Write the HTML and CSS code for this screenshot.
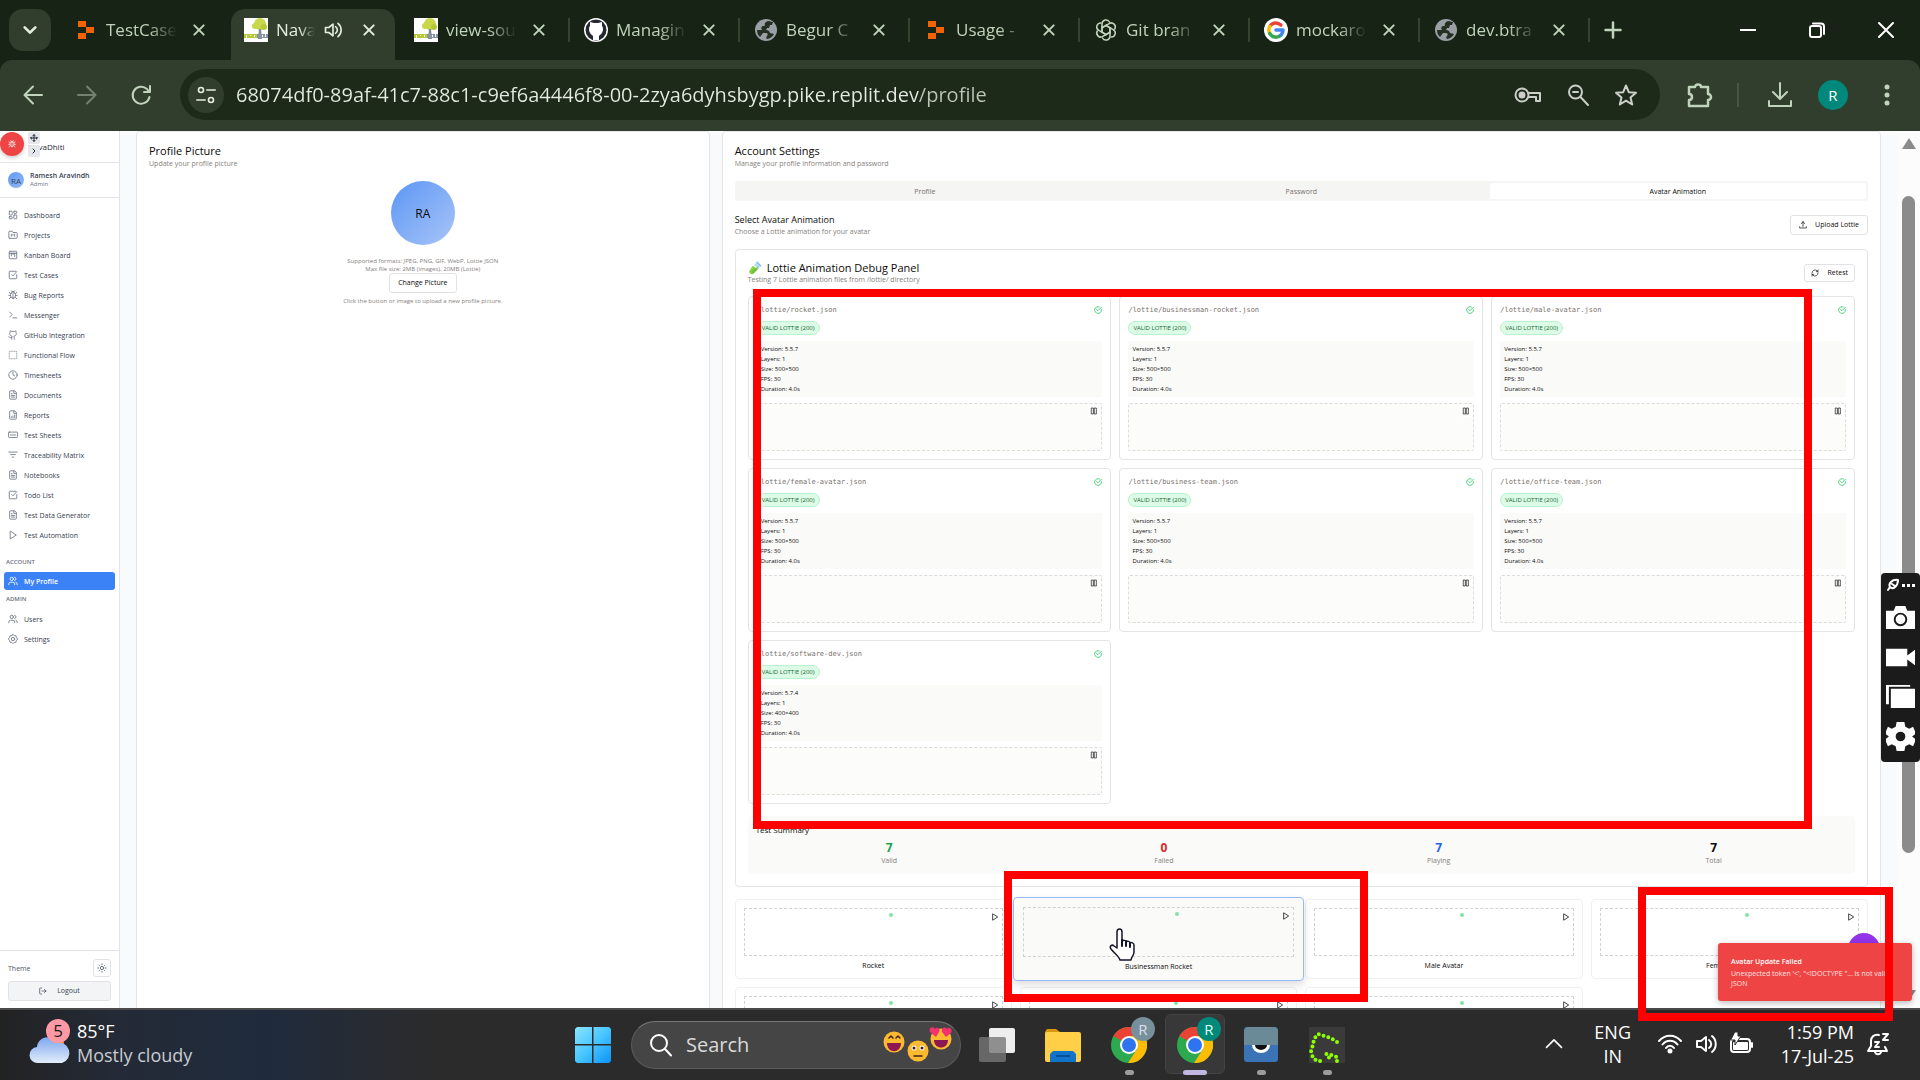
FILE: index.html
```html
<!DOCTYPE html>
<html lang="en">
<head>
<meta charset="utf-8">
<title>NavaDhiti</title>
<link rel="stylesheet" href="styles.css">
</head>
<body>
<svg class="sprite" aria-hidden="true">
  <defs>
    <symbol id="x" viewBox="0 0 24 24"><path d="M5 5l14 14M19 5L5 19"/></symbol>
    <symbol id="globe" viewBox="0 0 24 24"><circle cx="12" cy="12" r="11" fill="#9aa0a6" stroke="none"/><path fill="#172314" stroke="none" d="M14 3c-3 1-4 3-3 5h-2c-2 0-2 3-1 4H3c0 3 1 5 3 7l3-4h3c2 0 2 2 1 3s-1 2 0 3c3 0 6-3 7-5l-4-1c-1-3-3-3-4-3l1-2h2l1-3h2l1-3z" opacity=".9"/></symbol>
    <symbol id="replit" viewBox="0 0 24 24"><path fill="#f26207" stroke="none" d="M4 3h8v6H4zM12 9h8v6h-8zM4 15h8v6H4z"/></symbol>
    <symbol id="tree" viewBox="0 0 24 24"><path fill="#fff" stroke="none" d="M0 0h24v24H0z"/><g stroke="none"><circle cx="16" cy="6" r="6" fill="#c8d84a"/><circle cx="11" cy="8" r="3" fill="#c8d84a"/><circle cx="20" cy="9" r="3" fill="#b4ca35"/><path fill="#7d8a96" d="M15 11h2l1 10h-4z"/><path fill="#b4ca35" d="M0 16h13v4H0z"/><path fill="#8893a4" d="M13 16h11v4H13z"/><path fill="#fff" d="M2 17h1v3H2zM6 17h1v1H6zM10 17h1v2h-1zM18 17h1v2h-1zM21 16h1v3h-1z"/></g></symbol>
    <symbol id="dashboard" viewBox="0 0 24 24"><rect x="3" y="3" width="7" height="9" rx="1"/><rect x="14" y="3" width="7" height="5" rx="1"/><rect x="14" y="12" width="7" height="9" rx="1"/><rect x="3" y="16" width="7" height="5" rx="1"/></symbol>
    <symbol id="folder" viewBox="0 0 24 24"><path d="M4 20h16a2 2 0 0 0 2-2V8a2 2 0 0 0-2-2h-8l-2-3H4a2 2 0 0 0-2 2v13a2 2 0 0 0 2 2zM8 10v5M12 10v3M16 10v5"/></symbol>
    <symbol id="kanban" viewBox="0 0 24 24"><rect x="3" y="3" width="18" height="18" rx="2"/><path d="M8 7v7M12 7v4M16 7v9M3 8h18"/></symbol>
    <symbol id="check-square" viewBox="0 0 24 24"><path d="M21 11v8a2 2 0 0 1-2 2H5a2 2 0 0 1-2-2V5a2 2 0 0 1 2-2h14M9 11l3 3 9-10"/></symbol>
    <symbol id="bug" viewBox="0 0 24 24"><path d="M8 2l2 2M14 4l2-2M9 7V6a3 3 0 0 1 6 0v1M12 20c-3 0-6-3-6-6v-3a4 4 0 0 1 4-4h4a4 4 0 0 1 4 4v3c0 3-3 6-6 6zM12 20v-9M6 9L3 5M6 13H2M3 21l4-4M18 9l3-4M22 13h-4M17 17l4 4"/></symbol>
    <symbol id="terminal" viewBox="0 0 24 24"><path d="M4 17l6-6-6-6M12 19h9"/></symbol>
    <symbol id="github" viewBox="0 0 24 24"><path d="M15 22v-4c.1-1-.3-2.500-1-3.500 3 0 6-2 6-5.500 0-1.200-.3-2.500-1-3.500.3-1.100.3-2.300 0-3.500 0 0-1 0-3 1.500-2.600-.5-5.400-.5-8 0C6 2 5 2 5 2c-.3 1.200-.3 2.400 0 3.500C4.300 6.500 4 7.800 4 9c0 3.500 3 5.500 6 5.500-1 1-1.200 2.400-1 3.500v4M9 18c-4.500 2-5-2-7-2"/></symbol>
    <symbol id="dashed-square" viewBox="0 0 24 24"><path d="M5 3a2 2 0 0 0-2 2M19 3a2 2 0 0 1 2 2M21 19a2 2 0 0 1-2 2M5 21a2 2 0 0 1-2-2M9 3h1M9 21h1M14 3h1M14 21h1M3 9v1M21 9v1M3 14v1M21 14v1"/></symbol>
    <symbol id="clock" viewBox="0 0 24 24"><circle cx="12" cy="12" r="10"/><path d="M12 6v6l4 2"/></symbol>
    <symbol id="doc" viewBox="0 0 24 24"><path d="M15 2H6a2 2 0 0 0-2 2v16a2 2 0 0 0 2 2h12a2 2 0 0 0 2-2V7zM14 2v6h6M8 9h2M8 13h8M8 17h8"/></symbol>
    <symbol id="report" viewBox="0 0 24 24"><path d="M15 2H6a2 2 0 0 0-2 2v16a2 2 0 0 0 2 2h12a2 2 0 0 0 2-2V7zM14 2v6h6M8 18v-2M12 18v-4M16 18v-6"/></symbol>
    <symbol id="sheet" viewBox="0 0 24 24"><rect x="1" y="5" width="22" height="13" rx="2"/><path d="M5 12h14"/></symbol>
    <symbol id="filter" viewBox="0 0 24 24"><path d="M2 5h20M6 11h12M10 17h4"/></symbol>
    <symbol id="play" viewBox="0 0 24 24"><path d="M6 3l14 9-14 9z"/></symbol>
    <symbol id="pause" viewBox="0 0 24 24"><path d="M5 3h5v18H5zM14 3h5v18h-5z"/></symbol>
    <symbol id="users" viewBox="0 0 24 24"><path d="M16 21v-2a4 4 0 0 0-4-4H6a4 4 0 0 0-4 4v2M22 21v-2a4 4 0 0 0-3-3.900M16 3.100a4 4 0 0 1 0 7.800"/><circle cx="9" cy="7" r="4"/></symbol>
    <symbol id="settings" viewBox="0 0 24 24"><path d="M12 1l3 3 4 0 1 4 3 4-3 4-1 4-4 0-3 3-3-3-4 0-1-4-3-4 3-4 1-4 4 0z"/><circle cx="12" cy="12" r="4"/></symbol>
    <symbol id="move" viewBox="0 0 24 24"><path d="M12 2v20M2 12h20M9 5l3-3 3 3M9 19l3 3 3-3M5 9l-3 3 3 3M19 9l3 3-3 3"/></symbol>
    <symbol id="chev-r" viewBox="0 0 24 24"><path d="M9 6l6 6-6 6"/></symbol>
    <symbol id="sun" viewBox="0 0 24 24"><circle cx="12" cy="12" r="4"/><path d="M12 2v2M12 20v2M5 5l1 1M18 18l1 1M2 12h2M20 12h2M6 18l-1 1M19 5l-1 1"/></symbol>
    <symbol id="logout" viewBox="0 0 24 24"><path d="M8 21H4a2 2 0 0 1-2-2V5a2 2 0 0 1 2-2h4M16 17l5-5-5-5M21 12H9"/></symbol>
    <symbol id="upload" viewBox="0 0 24 24"><path d="M2 17v4h20v-4M17 8l-5-6-5 6M12 2v15"/></symbol>
    <symbol id="refresh" viewBox="0 0 24 24"><path d="M3 12a9 9 0 0 1 15-6.700L21 8M21 3v5h-5M21 12a9 9 0 0 1-15 6.700L3 16M8 16H3v5"/></symbol>
    <symbol id="ok" viewBox="0 0 24 24"><path d="M22 11v1a10 10 0 1 1-6-9.100M8 11l4 3 10-10"/></symbol>
    <symbol id="speaker" viewBox="0 0 24 24"><path d="M3 9v6h4l5 4V5L7 9zM15 8c3 2 3 6 0 8M18 4c5 4 5 12 0 16"/></symbol>
    <symbol id="chrome" viewBox="0 0 36 36"><g stroke="none"><circle cx="18" cy="18" r="18" fill="#2da94f"/><path fill="#ea4335" d="M18 18L2.400 9A18 18 0 0 1 33.600 9z"/><path fill="#fbbc05" d="M18 9h15.600A18 18 0 0 1 17 36l9-14z"/><circle cx="18" cy="18" r="9" fill="#fff"/><circle cx="18" cy="18" r="7" fill="#2f73ee"/></g></symbol>
  </defs>
</svg>

<header class="browser">
  <div class="tabstrip">
    <button class="tab-search" aria-label="Search tabs"><svg class="ic16" viewBox="0 0 24 24"><path d="M4 8l8 8 8-8"/></svg></button>
    <div class="tab"><svg class="fav"><use href="#replit"/></svg><span class="tab-title">TestCase</span><button class="tab-x" aria-label="Close"><svg><use href="#x"/></svg></button></div>
    <div class="tab active"><svg class="fav"><use href="#tree"/></svg><span class="tab-title short">Nava</span><svg class="audio"><use href="#speaker"/></svg><button class="tab-x" aria-label="Close"><svg><use href="#x"/></svg></button></div>
    <div class="tab sep"><svg class="fav"><use href="#tree"/></svg><span class="tab-title">view-sou</span><button class="tab-x" aria-label="Close"><svg><use href="#x"/></svg></button></div>
    <div class="tab sep"><svg class="fav" viewBox="0 0 24 24"><circle cx="12" cy="12" r="12" fill="#fff" stroke="none"/><circle cx="12" cy="12" r="10.500" fill="#24292f" stroke="none"/><path fill="#fff" stroke="none" d="M9 22v-4c-1-1-4-3-4-7 0-2 1-3 1-3V4l4 1h4l4-1v4s1 1 1 3c0 4-3 6-4 7v4z"/></svg><span class="tab-title">Managin</span><button class="tab-x" aria-label="Close"><svg><use href="#x"/></svg></button></div>
    <div class="tab sep"><svg class="fav"><use href="#globe"/></svg><span class="tab-title">Begur C</span><button class="tab-x" aria-label="Close"><svg><use href="#x"/></svg></button></div>
    <div class="tab sep"><svg class="fav"><use href="#replit"/></svg><span class="tab-title">Usage -</span><button class="tab-x" aria-label="Close"><svg><use href="#x"/></svg></button></div>
    <div class="tab sep"><svg class="fav" viewBox="0 0 24 24" stroke="#fff"><g stroke-width="1.500"><path id="petal" d="M12 7.500l4 2.300v5.400M8 9.500V6a4 4 0 0 1 7.500-2"/><use href="#petal" transform="rotate(60 12 12)"/><use href="#petal" transform="rotate(120 12 12)"/><use href="#petal" transform="rotate(180 12 12)"/><use href="#petal" transform="rotate(240 12 12)"/><use href="#petal" transform="rotate(300 12 12)"/></g></svg><span class="tab-title">Git bran</span><button class="tab-x" aria-label="Close"><svg><use href="#x"/></svg></button></div>
    <div class="tab sep"><svg class="fav" viewBox="0 0 24 24"><circle cx="12" cy="12" r="12" fill="#fff" stroke="none"/><g stroke-width="3.500"><path stroke="#ea4335" d="M5.800 8.500a7 7 0 0 1 11-1.500"/><path stroke="#fbbc05" d="M5.800 15.500a7 7 0 0 1 0-7"/><path stroke="#34a853" d="M17 17a7 7 0 0 1-11.200-1.500"/><path stroke="#4285f4" d="M12 12h7a7 7 0 0 1-2 5"/></g></svg><span class="tab-title">mockaro</span><button class="tab-x" aria-label="Close"><svg><use href="#x"/></svg></button></div>
    <div class="tab sep"><svg class="fav"><use href="#globe"/></svg><span class="tab-title">dev.btra</span><button class="tab-x" aria-label="Close"><svg><use href="#x"/></svg></button></div>
    <button class="new-tab" aria-label="New tab"><svg class="ic20" viewBox="0 0 24 24"><path d="M12 3v18M3 12h18"/></svg></button>
    <div class="win-ctl">
      <button aria-label="Minimize"><svg class="ic16" viewBox="0 0 16 16"><path d="M0 8h16"/></svg></button>
      <button aria-label="Restore"><svg class="ic16" viewBox="0 0 16 16"><rect x="1" y="4" width="11" height="11" rx="2"/><path d="M4 1.500h8a3 3 0 0 1 3 3V12"/></svg></button>
      <button aria-label="Close window"><svg class="ic16" viewBox="0 0 16 16"><path d="M1 1l14 14M15 1L1 15"/></svg></button>
    </div>
  </div>
  <div class="toolbar">
    <button aria-label="Back"><svg class="ic24" viewBox="0 0 24 24"><path d="M21 12H4M12 3.500L3.500 12l8.500 8.500"/></svg></button>
    <button aria-label="Forward" class="dim"><svg class="ic24" viewBox="0 0 24 24"><path d="M3 12h17M12 3.500l8.500 8.500-8.500 8.500"/></svg></button>
    <button aria-label="Reload"><svg class="ic24" viewBox="0 0 24 24"><path d="M20.500 14a8.500 8.500 0 1 1-2.500-8l2 2.500M21 3v6h-6"/></svg></button>
    <div class="omnibox">
      <button class="site-info" aria-label="Site information"><svg class="ic20" viewBox="0 0 24 24"><circle cx="6" cy="6" r="3"/><path d="M13 6h10M1 18h10"/><circle cx="18" cy="18" r="3"/></svg></button>
      <input class="url" aria-label="Address" value="68074df0-89af-41c7-88c1-c9ef6a4446f8-00-2zya6dyhsbygp.pike.replit.dev/profile">
      <button aria-label="Passwords"><svg class="ic28" viewBox="0 0 28 24"><circle cx="8" cy="12" r="6.500"/><circle cx="8" cy="12" r="2.500" fill="currentColor"/><path d="M14 10h12v8h-4v-4h-7"/></svg></button>
      <button aria-label="Zoom"><svg class="ic24" viewBox="0 0 24 24"><circle cx="9.500" cy="9" r="6.500"/><path d="M14.500 14l7.500 8M7 9h5"/></svg></button>
      <button aria-label="Bookmark"><svg class="ic24" viewBox="0 0 24 24"><path d="M12 2.500l2.800 6.700 7.200.6-5.500 4.700 1.700 7L12 17.700 5.800 21.500l1.700-7L2 9.800l7.200-.6z"/></svg></button>
    </div>
    <button aria-label="Extensions" class="ext"><svg class="ic28" viewBox="0 0 28 28"><path stroke-width="2.500" d="M3 6h6a3 2.500 0 0 1 6 0h7v7a3 3 0 0 1 0 6v6H3v-6c4 0 4-6 0-6z"/></svg></button>
    <span class="tb-sep"></span>
    <button aria-label="Downloads" class="dl"><svg class="ic28 bold" viewBox="0 0 28 28"><path d="M14 2v15M7 11l7 7 7-7M3 20v5h22v-5"/></svg></button>
    <button aria-label="Account" class="acct">R</button>
    <button aria-label="Menu"><svg class="ic24" viewBox="0 0 24 24"><g fill="currentColor" stroke="none"><circle cx="12" cy="4" r="2.500"/><circle cx="12" cy="12" r="2.500"/><circle cx="12" cy="20" r="2.500"/></g></svg></button>
  </div>
</header>

<div class="viewport">
  <aside class="sidebar">
    <div class="brand">
      <span class="brand-name">NavaDhiti</span>
      <button class="fab" aria-label="Report a bug"><svg class="ic8"><use href="#bug"/></svg></button>
      <button class="mini m1" aria-label="Move"><svg class="ic8"><use href="#move"/></svg></button>
      <button class="mini m2" aria-label="Expand"><svg class="ic8"><use href="#chev-r"/></svg></button>
    </div>
    <div class="user"><span class="user-av">RA</span><div><div class="user-name">Ramesh Aravindh</div><div class="user-role">Admin</div></div></div>
    <nav class="nav">
      <a href="#"><svg><use href="#dashboard"/></svg>Dashboard</a>
      <a href="#"><svg><use href="#folder"/></svg>Projects</a>
      <a href="#"><svg><use href="#kanban"/></svg>Kanban Board</a>
      <a href="#"><svg><use href="#check-square"/></svg>Test Cases</a>
      <a href="#"><svg><use href="#bug"/></svg>Bug Reports</a>
      <a href="#"><svg><use href="#terminal"/></svg>Messenger</a>
      <a href="#"><svg><use href="#github"/></svg>GitHub Integration</a>
      <a href="#"><svg><use href="#dashed-square"/></svg>Functional Flow</a>
      <a href="#"><svg><use href="#clock"/></svg>Timesheets</a>
      <a href="#"><svg><use href="#doc"/></svg>Documents</a>
      <a href="#"><svg><use href="#report"/></svg>Reports</a>
      <a href="#"><svg><use href="#sheet"/></svg>Test Sheets</a>
      <a href="#"><svg><use href="#filter"/></svg>Traceability Matrix</a>
      <a href="#"><svg><use href="#doc"/></svg>Notebooks</a>
      <a href="#"><svg><use href="#check-square"/></svg>Todo List</a>
      <a href="#"><svg><use href="#doc"/></svg>Test Data Generator</a>
      <a href="#"><svg><use href="#play"/></svg>Test Automation</a>
      <h2 class="first">ACCOUNT</h2>
      <a href="#" class="current"><svg><use href="#users"/></svg>My Profile</a>
      <h2>ADMIN</h2>
      <a href="#"><svg><use href="#users"/></svg>Users</a>
      <a href="#"><svg><use href="#settings"/></svg>Settings</a>
    </nav>
    <div class="side-foot">
      <div class="theme-row"><span>Theme</span><button class="btn sq" aria-label="Toggle theme"><svg class="ic10"><use href="#sun"/></svg></button></div>
      <button class="btn logout"><svg class="ic8"><use href="#logout"/></svg>Logout</button>
    </div>
  </aside>

  <main class="content">
    <section class="card">
      <h1>Profile Picture</h1>
      <p class="sub">Update your profile picture</p>
      <div class="pic">
        <div class="big-av">RA</div>
        <p class="hint">Supported formats: JPEG, PNG, GIF, WebP, Lottie JSON<br>Max file size: 2MB (images), 20MB (Lottie)</p>
        <button class="btn">Change Picture</button>
        <p class="hint">Click the button or image to upload a new profile picture.</p>
      </div>
    </section>

    <section class="card wide">
      <h1>Account Settings</h1>
      <p class="sub">Manage your profile information and password</p>
      <div class="tabs" role="tablist"><button role="tab">Profile</button><button role="tab">Password</button><button role="tab" aria-selected="true" class="on">Avatar Animation</button></div>
      <div class="sec-head">
        <div><h3>Select Avatar Animation</h3><p class="sub">Choose a Lottie animation for your avatar</p></div>
        <button class="btn"><svg class="ic8"><use href="#upload"/></svg>Upload Lottie</button>
      </div>

      <div class="panel">
        <div class="panel-head">
          <div>
            <h2 class="panel-title"><svg class="tube" viewBox="0 0 24 24"><g stroke="none"><path fill="#b9dcef" d="M15 2l7 7-4 4-8-6z"/><path fill="#8bd545" d="M8 8l9 6-8 8c-4 3-9-2-6-6z"/><path fill="#4cae35" d="M5 18l12-9 1 4-9 9z" opacity=".5"/><path fill="#7ab7e5" d="M14 2l2-1 7 7-1 2z"/></g></svg>Lottie Animation Debug Panel</h2>
            <p class="sub">Testing 7 Lottie animation files from /lottie/ directory</p>
          </div>
          <button class="btn small"><svg class="ic8"><use href="#refresh"/></svg>Retest</button>
        </div>
        <div class="tests">
          <article class="test"><div class="file">/lottie/rocket.json<svg class="ic8"><use href="#ok"/></svg></div><span class="badge">VALID LOTTIE (200)</span><div class="info">Version: 5.5.7<br>Layers: 1<br>Size: 500×500<br>FPS: 30<br>Duration: 4.0s</div><div class="stage"><button aria-label="Pause"><svg class="ic8"><use href="#pause"/></svg></button></div></article>
          <article class="test"><div class="file">/lottie/businessman-rocket.json<svg class="ic8"><use href="#ok"/></svg></div><span class="badge">VALID LOTTIE (200)</span><div class="info">Version: 5.5.7<br>Layers: 1<br>Size: 500×500<br>FPS: 30<br>Duration: 4.0s</div><div class="stage"><button aria-label="Pause"><svg class="ic8"><use href="#pause"/></svg></button></div></article>
          <article class="test"><div class="file">/lottie/male-avatar.json<svg class="ic8"><use href="#ok"/></svg></div><span class="badge">VALID LOTTIE (200)</span><div class="info">Version: 5.5.7<br>Layers: 1<br>Size: 500×500<br>FPS: 30<br>Duration: 4.0s</div><div class="stage"><button aria-label="Pause"><svg class="ic8"><use href="#pause"/></svg></button></div></article>
          <article class="test"><div class="file">/lottie/female-avatar.json<svg class="ic8"><use href="#ok"/></svg></div><span class="badge">VALID LOTTIE (200)</span><div class="info">Version: 5.5.7<br>Layers: 1<br>Size: 500×500<br>FPS: 30<br>Duration: 4.0s</div><div class="stage"><button aria-label="Pause"><svg class="ic8"><use href="#pause"/></svg></button></div></article>
          <article class="test"><div class="file">/lottie/business-team.json<svg class="ic8"><use href="#ok"/></svg></div><span class="badge">VALID LOTTIE (200)</span><div class="info">Version: 5.5.7<br>Layers: 1<br>Size: 500×500<br>FPS: 30<br>Duration: 4.0s</div><div class="stage"><button aria-label="Pause"><svg class="ic8"><use href="#pause"/></svg></button></div></article>
          <article class="test"><div class="file">/lottie/office-team.json<svg class="ic8"><use href="#ok"/></svg></div><span class="badge">VALID LOTTIE (200)</span><div class="info">Version: 5.5.7<br>Layers: 1<br>Size: 500×500<br>FPS: 30<br>Duration: 4.0s</div><div class="stage"><button aria-label="Pause"><svg class="ic8"><use href="#pause"/></svg></button></div></article>
          <article class="test"><div class="file">/lottie/software-dev.json<svg class="ic8"><use href="#ok"/></svg></div><span class="badge">VALID LOTTIE (200)</span><div class="info">Version: 5.7.4<br>Layers: 1<br>Size: 400×400<br>FPS: 30<br>Duration: 4.0s</div><div class="stage"><button aria-label="Pause"><svg class="ic8"><use href="#pause"/></svg></button></div></article>
        </div>
        <div class="summary">
          <h4>Test Summary</h4>
          <div class="stats">
            <div><b class="green">7</b><span>Valid</span></div>
            <div><b class="red">0</b><span>Failed</span></div>
            <div><b class="blue">7</b><span>Playing</span></div>
            <div><b>7</b><span>Total</span></div>
          </div>
        </div>
      </div>

      <div class="avatars">
        <div class="choice"><div class="preview"><i class="dot"></i><svg class="ic8"><use href="#play"/></svg></div><span>Rocket</span></div>
        <div class="choice hover"><div class="preview"><i class="dot"></i><svg class="ic8"><use href="#play"/></svg></div><span>Businessman Rocket</span></div>
        <div class="choice"><div class="preview"><i class="dot"></i><svg class="ic8"><use href="#play"/></svg></div><span>Male Avatar</span></div>
        <div class="choice"><div class="preview"><i class="dot"></i><svg class="ic8"><use href="#play"/></svg></div><span>Female Avatar</span></div>
        <div class="choice"><div class="preview"><i class="dot"></i><svg class="ic8"><use href="#play"/></svg></div><span>Business Team</span></div>
        <div class="choice"><div class="preview"><i class="dot"></i><svg class="ic8"><use href="#play"/></svg></div><span>Office Team</span></div>
        <div class="choice"><div class="preview"><i class="dot"></i><svg class="ic8"><use href="#play"/></svg></div><span>Software Dev</span></div>
      </div>
    </section>
  </main>

  <div class="scrollbar"><span class="arrow up"></span><span class="thumb"></span><span class="arrow down"></span></div>
  <button class="chat" aria-label="Chat"></button>
  <div class="toast" role="alert"><strong>Avatar Update Failed</strong><p>Unexpected token '&lt;', "&lt;!DOCTYPE "... is not valid JSON</p></div>
</div>

<footer class="taskbar">
  <div class="weather">
    <svg class="cloud" viewBox="0 0 44 48"><defs><linearGradient id="cl" x1="0" y1="0" x2="0" y2="1"><stop offset="0" stop-color="#7ea6ee"/><stop offset="1" stop-color="#e2edfc"/></linearGradient></defs><g stroke="none"><circle cx="27" cy="24" r="8" fill="#ff8b1a"/><path fill="url(#cl)" d="M9 44a8 8 0 0 1-1-16 10 10 0 0 1 19-4 8 8 0 0 1 6 20z"/><circle cx="29" cy="12" r="12" fill="#ff99a4"/></g><text x="29" y="18" text-anchor="middle">5</text></svg>
    <div><div>85°F</div><div class="grey">Mostly cloudy</div></div>
  </div>
  <div class="apps">
    <button aria-label="Start" class="start"><svg viewBox="0 0 36 36"><defs><linearGradient id="wn" x1="0" y1="0" x2="1" y2="1"><stop offset="0" stop-color="#8be4ff"/><stop offset=".5" stop-color="#48c6ff"/><stop offset="1" stop-color="#0a93f9"/></linearGradient></defs><path stroke="none" fill="url(#wn)" d="M2 0h15v17H0V2zM18.500 0H34l2 2v15H18.500zM0 18.500h17V36H2l-2-2zM18.500 18.500H36V34l-2 2H18.500z"/></svg></button>
    <label class="search"><svg class="ic24" viewBox="0 0 24 24"><circle cx="11" cy="10" r="8"/><path d="M17 16l6 6.500"/></svg><input aria-label="Search" placeholder="Search">
      <svg class="emo" viewBox="0 0 70 44"><g stroke="none"><circle cx="11" cy="19" r="10.500" fill="#fdb92f"/><path fill="#8c1852" d="M4 20h14c0 11-14 11-14 0z"/><circle cx="35" cy="28" r="10.500" fill="#fdb92f"/><circle cx="31" cy="25" r="2.500" fill="#fff"/><circle cx="39" cy="25" r="2.500" fill="#fff"/><circle cx="31" cy="25" r="1.500" fill="#402216"/><circle cx="39" cy="25" r="1.500" fill="#402216"/><circle cx="58" cy="16" r="10.500" fill="#fdb92f"/><path fill="#8c1852" d="M51 17h14c0 10-14 10-14 0z"/><path fill="#f5306f" d="M53 14l-6-5c-2-5 4-6 5-3 2-3 6 0 4 3zM63 14l-4-5c-1-4 3-6 5-3 2-3 6 0 4 4z"/></g><path stroke="#402216" stroke-width="1.500" d="M31 33h8M6 15l2-2 2 2M13 15l2-2 2 2"/></svg></label>
    <button aria-label="Task view"><svg viewBox="0 0 36 36"><g stroke="none"><rect x="10" y="1" width="26" height="25" rx="2" fill="#eee"/><rect y="10" width="27" height="25" rx="2" fill="#777" opacity=".8"/></g></svg></button>
    <button aria-label="File Explorer"><svg viewBox="0 0 36 36"><g stroke="none"><path fill="#d9980a" d="M0 5l2-3h9l4 3v6H0z"/><rect y="5" width="36" height="30" rx="2" fill="#ffcf48"/><path fill="#1173c9" d="M5 35V27l3-3h20l3 3v8z"/><rect x="11" y="28" width="14" height="2" fill="#0a4e94"/></g></svg></button>
    <button aria-label="Chrome" class="app run"><svg><use href="#chrome"/></svg><span class="rb grey-b">R</span></button>
    <button aria-label="Chrome profile" class="app run cur"><svg><use href="#chrome"/></svg><span class="rb">R</span></button>
    <button aria-label="Viewer" class="app run"><svg viewBox="0 0 36 36"><g stroke="none"><rect x="1" width="34" height="35" rx="3" fill="#3a74b6"/><path fill="#6a8a98" d="M4 0h28l3 3v15H1V3z"/><path fill="#fff" d="M9 18h18a9 8 0 0 1-18 0z"/><path fill="#111" d="M12 18h12a6 5 0 0 1-12 0z"/></g></svg></button>
    <button aria-label="Greenshot" class="app run"><svg viewBox="0 0 36 36"><rect width="36" height="36" fill="#3a3a3a" stroke="none"/><path stroke="#8cff00" stroke-width="4" stroke-dasharray="0 5" d="M28 15L22 11 15 9 9 7 5 12 4 18 2 24 4 31 8 34 14 34M28 34V30L22 28 17 27 23 34"/></svg></button>
  </div>
  <div class="tray">
    <button aria-label="Hidden icons"><svg class="ic20" viewBox="0 0 24 24"><path d="M3 16l9-9 9 9"/></svg></button>
    <div class="lang">ENG<br>IN</div>
    <div class="status">
      <svg class="ic24" viewBox="0 0 24 24"><path d="M1 9c6-7 16-7 22 0M4.500 12.500c4-5 11-5 15 0M8 16c2-3 6-3 8 0"/><circle cx="12" cy="19" r="1.500" fill="#fff"/></svg>
      <svg class="ic24"><use href="#speaker"/></svg>
      <svg class="ic24" viewBox="0 0 24 24"><rect x="1" y="7" width="19" height="13" rx="3"/><path fill="#fff" d="M4 11h13v6H4zM22 11v4"/><path fill="#fff" stroke="#2b2b2b" stroke-width="1" d="M5 0h3v4h3L5 13v-5H1z"/></svg>
    </div>
    <div class="clock">1:59 PM<br>17-Jul-25</div>
    <svg class="ic24" viewBox="0 0 24 24"><path d="M13 3C8 2 5 5 5 9v5l-3 5h19l-2-4M9 20c1 3 5 3 6 0M9 10h4l-4 5h4M17 2h5l-5 6h5"/></svg>
  </div>
</footer>

<div class="dock">
  <div class="dock-top"><svg viewBox="0 0 14 14"><path stroke-width="2" d="M2 12l2-3M4 9c-2-3 2-8 8-7 0 6-5 10-8 7zM6 6l3 2"/></svg><svg viewBox="0 0 14 14"><path fill="#fff" stroke="none" d="M1 6h3v3H1zM6 6h3v3H6zM11 6h3v3h-3z"/></svg></div>
  <button aria-label="Screenshot"><svg viewBox="0 0 30 30"><path fill="#fff" stroke="none" d="M0 8h8l2-5h10l2 5h8v19H0z"/><circle cx="15" cy="17" r="6" stroke="#1b1b1b" stroke-width="2"/></svg></button>
  <button aria-label="Record"><svg viewBox="0 0 30 30"><path fill="#fff" stroke="none" d="M0 6h22v7l8-6v16l-8-6v7H0z"/></svg></button>
  <button aria-label="Gallery"><svg viewBox="0 0 30 30"><path fill="#fff" stroke="none" d="M0 3h25v2H3v18H0zM5 7h25v20H5z"/></svg></button>
  <button aria-label="Settings"><svg viewBox="0 0 30 30"><path fill="#fff" fill-rule="evenodd" stroke="none" d="M11 0h8l1 5 4 2 4-2 3 7-4 3 4 3-3 7-4-2-4 2-1 5h-8l-1-5-4-2-4 2-3-7 4-3-4-3 3-7 4 2 4-2zM15 10a5 5 0 1 0 0 10 5 5 0 0 0 0-10z"/></svg></button>
</div>
<div class="mark mark-tests"></div>
<div class="mark mark-choice"></div>
<div class="mark mark-toast"></div>
<svg class="hand" viewBox="0 0 26 34"><path fill="#fff" stroke="#15152a" stroke-width="1.500" d="M8 20V4c0-4 5-4 5 0v9c1-1 4-1 4 1 1-1 4-1 4 1 1-1 4 0 4 2v7c0 4-3 5-3 8H11c-1-4-5-6-9-11-2-3 1-5 3-3z"/><path stroke="#15152a" d="M13 12v6M17 13v5M21 15v4"/></svg>
</body>
</html>
```
FILE: styles.css
```css
* { box-sizing: border-box; margin: 0; padding: 0; }
html, body { height: 100%; }
body { display: flex; flex-direction: column; overflow: hidden; position: relative; font-family: "Open Sans", "Noto Sans", sans-serif; background: #f9fafb; }
button, input { font: inherit; color: inherit; border: 0; background: none; }
button { display: flex; align-items: center; justify-content: center; flex-shrink: 0; }
a { color: inherit; text-decoration: none; }
svg { display: block; flex-shrink: 0; fill: none; stroke: currentColor; stroke-width: 2; stroke-linecap: round; stroke-linejoin: round; }
.sprite { position: absolute; width: 0; height: 0; }
.ic8 { width: 8px; height: 8px; }
.ic10 { width: 10px; height: 10px; }
.ic16 { width: 16px; height: 16px; }
.ic20 { width: 20px; height: 20px; }
.ic24 { width: 24px; height: 24px; }
.ic28 { width: 28px; height: 28px; }
.bold { stroke-width: 3; }

/* Browser chrome */
.browser { background: #172314; color: #c0d3bb; flex-shrink: 0; }
.tabstrip { display: flex; align-items: center; height: 60px; padding-left: 9px; }
.tab-search { width: 42px; height: 42px; border-radius: 14px; background: #313e2e; color: #e3ecdf; margin-right: 8px; }
.tab-search svg { stroke-width: 4; }
.tab { flex: 0 1 170px; min-width: 0; height: 24px; display: flex; align-items: center; padding: 0 22px 0 15px; position: relative; }
.tab.sep::after { content: ""; position: absolute; right: -1px; top: 0; width: 2px; height: 24px; background: #35432f; }
.fav { width: 24px; height: 24px; margin-right: 8px; }
.tab-title { flex: 1; overflow: hidden; white-space: nowrap; font-size: 17px; line-height: 24px; mask-image: linear-gradient(90deg, #000 60%, transparent); margin-right: 14px; }
.tab-title.short { margin-right: 8px; }
.audio { width: 20px; height: 20px; margin-right: 18px; }
.tab-x svg { width: 16px; height: 16px; stroke-width: 3; }
.tab.active { height: 51px; align-self: flex-end; color: #e3ecdf; padding-bottom: 9px; }
.tab.active::before { content: ""; position: absolute; inset: 0 4px 0 2px; border-radius: 14px 14px 0 0; background: #313e2e; }
.tab.active > * { position: relative; }
.new-tab { width: 48px; height: 42px; }
.new-tab svg { stroke-width: 3; }
.win-ctl { display: flex; margin-left: auto; color: #fff; }
.win-ctl button { width: 69px; height: 60px; }
.win-ctl svg { stroke-width: 2; }
.toolbar { display: flex; align-items: center; height: 71px; padding: 0 21px 2px 21px; background: #313e2e; border-radius: 12px 12px 0 0; }
.toolbar > button { width: 24px; margin-right: 30px; }
.toolbar > .dim { color: #74826f; }
.toolbar > .ext { margin-right: 25px; }
.toolbar > .dl { margin-right: 26px; }
.toolbar svg { stroke-width: 2; }
.omnibox { flex: 1; display: flex; align-items: center; height: 51px; margin-right: 28px; padding: 0 22px 0 8px; border-radius: 26px; background: #1d2a1a; color: #cbcfc8; gap: 24px; margin-left: -3px; }
.site-info { width: 36px; height: 36px; border-radius: 50%; background: #313e2e; color: #e3ecdf; margin-right: -12px; }
.url { flex: 1; min-width: 0; font-size: 20px; line-height: 32px; background: linear-gradient(90deg, #e4ebe1 682px, #bcc5b8 682px); -webkit-background-clip: text; background-clip: text; color: transparent; }
.tb-sep { width: 2px; height: 24px; background: #475642; margin-right: 29px; }
.toolbar > .acct { width: 30px; height: 30px; border-radius: 50%; background: #00897b; color: #fff; font-size: 15px; margin-right: 27px; }
.toolbar > button:last-child { margin-right: 0; }

/* App viewport */
.viewport { flex: 1; min-height: 0; display: flex; position: relative; overflow: hidden; background: #f9fafb; color: #0c0a09; }
.sidebar { width: 120px; flex-shrink: 0; display: flex; flex-direction: column; background: #fff; border-right: 1px solid #e2e4e9; font-size: 7px; color: #374151; }
.brand { height: 32px; display: flex; align-items: center; padding-left: 28px; border-bottom: 1px solid #e2e4e9; position: relative; }
.brand-name { font-size: 8px; font-weight: 500; color: #1f2937; }
.fab { position: absolute; left: 0; top: 1px; width: 24px; height: 24px; border-radius: 50%; background: #ef4444; color: #fff; box-shadow: 0 2px 4px #0003; }
.mini { position: absolute; left: 28px; width: 12px; height: 12px; border-radius: 2px; background: #e5e7eb; color: #1f2937; }
.mini svg { stroke-width: 3; }
.m1 { top: 1px; }
.m2 { top: 14px; }
.user { display: flex; align-items: center; gap: 6px; height: 35px; padding-left: 8px; border-bottom: 1px solid #e2e4e9; line-height: 9px; }
.user-av { width: 16px; height: 16px; border-radius: 50%; background: linear-gradient(135deg, #5f99f6, #93b8f8); display: flex; align-items: center; justify-content: center; font-size: 8px; }
.user-name { font-weight: 600; }
.user-role { font-size: 6px; color: #6b7280; }
.nav { flex: 1; padding: 8px 4px; font-weight: 500; }
.nav a { display: flex; align-items: center; gap: 6px; height: 18px; margin-bottom: 2px; padding-left: 4px; border-radius: 3px; }
.nav a svg { width: 10px; height: 10px; color: #6b7280; }
.nav h2 { font-size: 6px; line-height: 10px; font-weight: 600; color: #6b7280; padding: 2px 2px 6px; }
.nav h2.first { padding-top: 11px; padding-bottom: 5px; }
.nav a.current { background: #3b82f6; color: #fff; font-weight: 600; }
.nav a.current svg { color: #fff; }
.side-foot { border-top: 1px solid #e2e4e9; padding: 8px 8px 7px; display: flex; flex-direction: column; gap: 4px; }
.theme-row { display: flex; justify-content: space-between; align-items: center; color: #4b5563; }
.btn { height: 20px; padding: 0 8px; gap: 8px; border: 1px solid #e2e2e4; border-radius: 3px; background: #fff; font-size: 7px; font-weight: 500; line-height: 10px; }
.btn.sq { width: 18px; height: 18px; padding: 0; }
.btn.small { height: 18px; padding: 0 6px; }
.btn.logout { background: #f3f4f6; gap: 10px; }

.content { flex: 1; min-width: 0; display: grid; grid-template-columns: repeat(3, minmax(0, 1fr)); gap: 12px; padding: 0 16px; }
.card { background: #fff; border: 1px solid #e4e5e8; border-radius: 4px 4px 0 0; padding: 11px 12px 12px; }
.wide { grid-column: span 2; }
h1 { font-size: 11px; line-height: 16px; font-weight: 500; }
.sub { font-size: 7px; line-height: 10px; color: #85817d; }
.pic { display: flex; flex-direction: column; align-items: center; margin-top: 12px; }
.big-av { width: 64px; height: 64px; border-radius: 50%; background: linear-gradient(135deg, #5c96f5, #a9c5f8); display: flex; align-items: center; justify-content: center; font-size: 12px; margin-bottom: 12px; }
.hint { font-size: 6px; line-height: 8px; text-align: center; color: #85817d; }
.pic .btn { margin-bottom: 4px; }
.tabs { display: grid; grid-template-columns: repeat(3, 1fr); height: 20px; margin-top: 12px; padding: 2px; border-radius: 3px; background: #f5f5f4; font-size: 7px; font-weight: 500; color: #78716c; }
.tabs .on { background: #fff; color: #0c0a09; border-radius: 2px; }
.sec-head { display: flex; justify-content: space-between; align-items: center; height: 24px; margin: 12px 0; }
h3 { font-size: 9px; line-height: 14px; font-weight: 500; }
.panel { border: 1px solid #e4e4e4; border-radius: 4px; padding: 12px; }
.panel-head { display: flex; justify-content: space-between; align-items: center; height: 22px; margin-bottom: 12px; }
.panel-title { display: flex; align-items: center; gap: 5px; font-size: 11px; line-height: 14px; font-weight: 500; }
.tube { width: 14px; height: 14px; }
.tests { display: grid; grid-template-columns: repeat(3, minmax(0, 1fr)); gap: 8px; }
.test { border: 1px solid #e4e4e4; border-radius: 4px; padding: 8px; display: flex; flex-direction: column; align-items: stretch; }
.file { display: flex; justify-content: space-between; align-items: center; height: 10px; font: 7px/10px "DejaVu Sans Mono", monospace; color: #78716c; }
.file svg { color: #4ccf7f; stroke-width: 3; }
.badge { align-self: flex-start; margin: 6px 0; height: 14px; padding: 0 4px; border: 1px solid #bbf0cd; border-radius: 7px; background: #dcfce7; color: #166534; font-size: 6px; line-height: 12px; font-weight: 500; }
.info { height: 56px; padding: 3px 4px; border-radius: 2px; background: #fafaf9; font-size: 6px; line-height: 10px; }
.stage { height: 48px; margin-top: 6px; border: 1px dashed #dcdcda; border-radius: 2px; background: #fcfcfb; display: flex; justify-content: flex-end; align-items: flex-start; padding: 1px; }
.stage button { width: 12px; height: 12px; background: #fff; border-radius: 2px; }
.summary { margin-top: 12px; padding: 8px; height: 58px; border-radius: 4px; background: #fafaf9; }
h4 { font-size: 8px; line-height: 12px; font-weight: 500; }
.stats { display: grid; grid-template-columns: repeat(4, 1fr); gap: 8px; margin-top: 4px; text-align: center; }
.stats b { display: block; font-size: 12px; line-height: 16px; }
.stats span { display: block; font-size: 7px; line-height: 10px; color: #85817d; }
.green { color: #16a34a; }
.red { color: #dc2626; }
.blue { color: #2563eb; }
.avatars { display: grid; grid-template-columns: repeat(4, minmax(0, 1fr)); gap: 8px; margin-top: 12px; }
.choice { height: 80px; padding: 8px; border: 1px solid #f0f0f0; border-radius: 4px; font-size: 7px; font-weight: 500; text-align: center; }
.choice > span { display: block; line-height: 20px; }
.preview { height: 48px; border: 1px dashed #d2d2d0; display: flex; justify-content: space-between; align-items: flex-start; padding: 4px 3px 0 4px; }
.dot { width: 4px; height: 4px; border-radius: 50%; background: #86e0a8; margin-left: 56%; }
.preview svg { stroke-width: 3; color: #444; }
.choice.hover { height: 84px; margin: -2px -7px; padding: 9px; background: #fafaf9; border-color: #93bbfa; box-shadow: 0 4px 8px #0002; position: relative; }
.hover .preview { height: 50px; }

.scrollbar { width: 23px; flex-shrink: 0; background: #fcfcfc; display: flex; flex-direction: column; align-items: center; padding: 7px 0; }
.thumb { width: 13px; height: 657px; margin: 47px 0 auto; border-radius: 7px; background: #8b8b8b; }
.arrow { border: 7px solid transparent; }
.up { border-top: 0; border-bottom: 11px solid #8b8b8b; }
.down { border-bottom: 0; border-top: 11px solid #8b8b8b; }
.chat { position: absolute; right: 40px; bottom: 43px; width: 32px; height: 32px; border-radius: 50%; background: #9333ea; }
.toast { position: absolute; right: 8px; bottom: 7px; width: 194px; padding: 14px 16px 12px 13px; border-radius: 3px; background: #ef4444; color: #fff; font-size: 7px; line-height: 10px; box-shadow: 0 2px 6px #0004; }
.toast strong { display: block; margin-bottom: 2px; font-weight: 600; }
.toast p { color: #fde3e3; }

/* Taskbar */
.taskbar { height: 72px; flex-shrink: 0; display: grid; grid-template-columns: 1fr auto 1fr; align-items: center; color: #fff; font-size: 18px; line-height: 24px; border-top: 2px solid #4a4a4a; background: linear-gradient(90deg, #222 0, #242a36 110px, #1f2b3d 270px, #262b34 350px, #2b2b2b 440px); }
.weather { display: flex; align-items: center; gap: 4px; padding: 0 0 4px 29px; }
.cloud { width: 44px; height: 48px; }
.cloud text { fill: #1b1b1b; stroke: none; font-size: 17px; }
.grey { color: #c9ccd1; }
.apps { display: flex; align-items: center; gap: 30px; height: 70px; }
.apps svg { width: 36px; height: 36px; }
.start { margin-right: -10px; }
.search { display: flex; align-items: center; width: 330px; height: 48px; border-radius: 24px; background: #454545; border: 1px solid #5a5a5a; border-top-color: #777; padding: 0 7px 0 16px; gap: 14px; margin-right: -12px; }
.search input { flex: 1; min-width: 0; font-size: 20px; }
.search input::placeholder { color: #dadada; opacity: 1; }
.apps .search .ic24 { width: 24px; height: 24px; }
.apps .search .emo { width: 70px; height: 44px; }
.app { position: relative; }
.app > * { position: relative; }
.run::after { content: ""; position: absolute; bottom: -12px; left: 14px; width: 9px; height: 5px; border-radius: 3px; background: #9c9c9c; }
.cur::before { content: ""; position: absolute; inset: -13px -12px -11px; border-radius: 6px; background: #383838; border: 1px solid #434343; }
.cur::after { left: 6px; width: 24px; background: #c0b8e0; }
.app .rb { position: absolute; left: 20px; top: -10px; width: 24px; height: 24px; border-radius: 50%; background: #00897b; color: #dfe; font-size: 15px; }
.app .grey-b { background: #78909c; color: #dde; }
.tray { display: flex; align-items: center; justify-content: flex-end; padding: 0 30px 3px 0; }
.tray > button { margin-right: 30px; }
.lang { text-align: center; margin-right: 27px; }
.status { display: flex; gap: 12px; margin-right: 24px; }
.clock { text-align: right; margin-right: 12px; min-width: 76px; }

/* Capture dock and overlays */
.dock { position: absolute; right: 0; top: 573px; width: 39px; height: 189px; padding: 5px 5px 11px; border-radius: 4px; background: #1b1b1b; color: #fff; display: flex; flex-direction: column; justify-content: space-between; }
.dock-top { display: flex; justify-content: space-between; }
.dock-top svg { width: 14px; height: 14px; }
.dock button svg { width: 29px; height: 29px; }
.mark { position: absolute; border: 8px solid #f00; pointer-events: none; }
.mark-tests { left: 753px; right: 108px; top: 289px; height: 540px; }
.mark-choice { left: 1004px; width: 364px; top: 871px; height: 131px; }
.mark-toast { right: 27px; width: 255px; bottom: 59px; height: 134px; }
.hand { position: absolute; left: 1109px; top: 928px; width: 26px; height: 34px; }
```
